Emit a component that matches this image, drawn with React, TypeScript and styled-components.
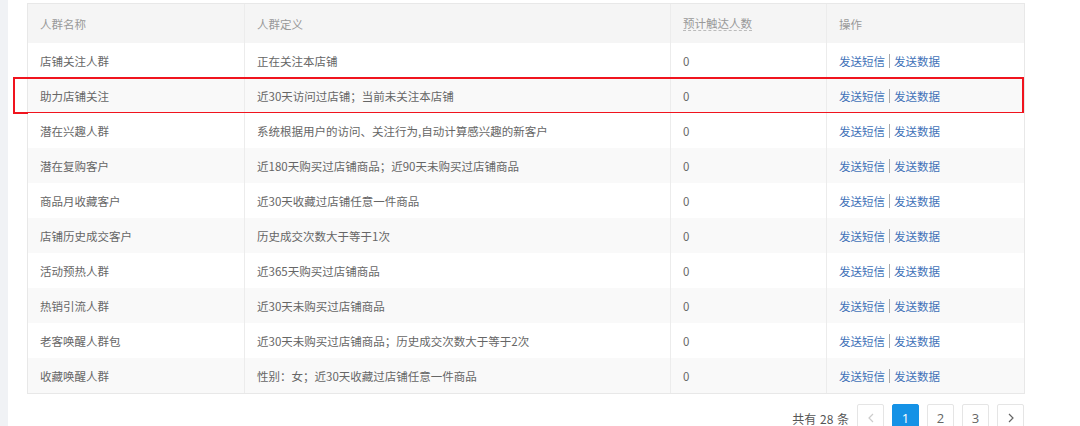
import React from "react";
import styled, { createGlobalStyle } from "styled-components";

const Global = createGlobalStyle`
  html, body { margin: 0; padding: 0; background: #fff; }
  body { font-family: "Noto Sans CJK SC", "Noto Sans", sans-serif; font-size: 11.5px; }
`;

const Page = styled.div`
  display: flex;
  height: 426px;
  overflow: hidden;
`;

const SideStrip = styled.div`
  width: 8px;
  flex: none;
  background: #f0f2f5;
`;

const Content = styled.div`
  padding: 3px 0 0 19px;
  width: 998px;
`;

const Table = styled.div`
  border: 1px solid #e8e8e8;
  width: 998px;
  box-sizing: border-box;
`;

const Row = styled.div<{ $head?: boolean; $alt?: boolean; $mark?: boolean }>`
  display: grid;
  grid-template-columns: 217px 426px 156px 197px;
  height: ${(p) => (p.$head ? "39px" : "35px")};
  background: ${(p) => (p.$head ? "#f5f5f5" : p.$alt ? "#f9f9f9" : "#fff")};
  color: ${(p) => (p.$head ? "#999" : "#666")};
  position: relative;
  ${(p) =>
    p.$mark &&
    `
    &::after {
      content: "";
      position: absolute;
      left: -15px;
      right: 0px;
      top: -1px;
      bottom: -1px;
      border: 2px solid #f0141e;
      pointer-events: none;
    }
  `}
`;

const Cell = styled.div<{ $last?: boolean }>`
  display: flex;
  align-items: center;
  padding-left: 12px;
  border-right: ${(p) => (p.$last ? "none" : "1px solid #ececec")};
  white-space: nowrap;
  line-height: 16px;
`;

const Dotted = styled.span`
  border-bottom: 1px dashed #bbb;
  line-height: 14px;
`;

const Link = styled.a`
  color: #4172b8;
  text-decoration: none;
`;

const Sep = styled.span`
  display: inline-block;
  width: 1px;
  height: 14px;
  background: #aaa;
  margin: 0 4px;
`;

const Pager = styled.div`
  display: flex;
  justify-content: flex-end;
  align-items: center;
  gap: 8px;
  margin-top: 10px;
  padding-right: 1px;
`;

const Total = styled.span`
  color: #555;
  font-size: 12px;
  word-spacing: 1px;
`;

const PageBtn = styled.div<{ $active?: boolean }>`
  width: 27px;
  height: 28px;
  box-sizing: border-box;
  border: 1px solid ${(p) => (p.$active ? "#1592e6" : "#e5e5e5")};
  border-radius: 2px;
  background: ${(p) => (p.$active ? "#1592e6" : "#fff")};
  color: ${(p) => (p.$active ? "#fff" : "#666")};
  display: flex;
  align-items: center;
  justify-content: center;
  font-family: "Open Sans", "Noto Sans", sans-serif;
  font-size: 13px;
`;

const Chevron = ({ dir, color }: { dir: "l" | "r"; color: string }) => (
  <svg width="8" height="10" viewBox="0 0 8 10">
    <path
      d={dir === "l" ? "M6 1 L2 5 L6 9" : "M2 1 L6 5 L2 9"}
      fill="none"
      stroke={color}
      strokeWidth="1.2"
    />
  </svg>
);

const rows = [
  ["店铺关注人群", "正在关注本店铺"],
  ["助力店铺关注", "近30天访问过店铺；当前未关注本店铺"],
  ["潜在兴趣人群", "系统根据用户的访问、关注行为,自动计算感兴趣的新客户"],
  ["潜在复购客户", "近180天购买过店铺商品；近90天未购买过店铺商品"],
  ["商品月收藏客户", "近30天收藏过店铺任意一件商品"],
  ["店铺历史成交客户", "历史成交次数大于等于1次"],
  ["活动预热人群", "近365天购买过店铺商品"],
  ["热销引流人群", "近30天未购买过店铺商品"],
  ["老客唤醒人群包", "近30天未购买过店铺商品；历史成交次数大于等于2次"],
  ["收藏唤醒人群", "性别：女；近30天收藏过店铺任意一件商品"],
];

export default function App() {
  return (
    <Page>
      <Global />
      <SideStrip />
      <Content>
        <Table>
          <Row $head>
            <Cell>人群名称</Cell>
            <Cell>人群定义</Cell>
            <Cell>
              <Dotted>预计触达人数</Dotted>
            </Cell>
            <Cell $last>操作</Cell>
          </Row>
          {rows.map(([name, def], i) => (
            <Row key={name} $alt={i % 2 === 1} $mark={i === 1}>
              <Cell>{name}</Cell>
              <Cell>{def}</Cell>
              <Cell>0</Cell>
              <Cell $last>
                <Link>发送短信</Link>
                <Sep />
                <Link>发送数据</Link>
              </Cell>
            </Row>
          ))}
        </Table>
        <Pager>
          <Total>共有 28 条</Total>
          <PageBtn>
            <Chevron dir="l" color="#ccc" />
          </PageBtn>
          <PageBtn $active>1</PageBtn>
          <PageBtn>2</PageBtn>
          <PageBtn>3</PageBtn>
          <PageBtn>
            <Chevron dir="r" color="#666" />
          </PageBtn>
        </Pager>
      </Content>
    </Page>
  );
}
